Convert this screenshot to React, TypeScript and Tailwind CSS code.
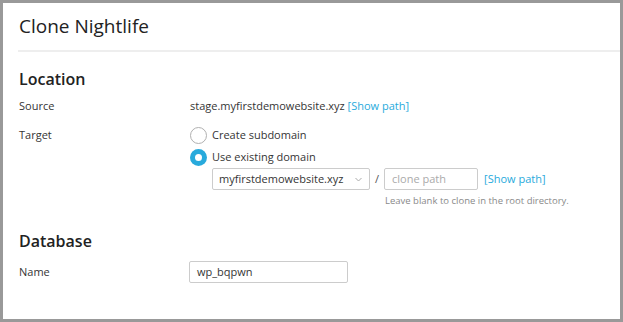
import React from 'react';

const Radio: React.FC<{ checked?: boolean; label: string }> = ({ checked, label }) => {
  return (
    <label className="flex items-center h-[22px] gap-[5px] cursor-pointer">
      {checked ? (
        <span className="w-[17px] h-[17px] rounded-full bg-[#28aadc] flex items-center justify-center">
          <span className="w-[7px] h-[7px] rounded-full bg-white" />
        </span>
      ) : (
        <span className="w-[17px] h-[17px] rounded-full border border-[#b0b0b0] bg-white" />
      )}
      <span>{label}</span>
    </label>
  );
};

const App: React.FC = () => {
  return (
    <div className="w-[623px] h-[322px] bg-[#999999] p-[3px] font-['Open_Sans',sans-serif] text-[11px] text-[#353535]">
      <div className="w-full h-full bg-white overflow-hidden">
        <div className="h-[47px] flex items-center pl-4 text-[19px] text-[#222]">Clone Nightlife</div>
        <div className="ml-[15px] h-[2px] bg-[#eeeeee]" />

        <div className="pl-4">
          <h2 className="mt-[16px] leading-[22px] text-[16px] font-semibold text-[#222]">Location</h2>

          <div className="mt-[6px] flex leading-[20px]">
            <div className="w-[171px]">Source</div>
            <div>
              stage.myfirstdemowebsite.xyz{' '}
              <a className="text-[#28aadc] cursor-pointer">[Show path]</a>
            </div>
          </div>

          <div className="mt-[8px] flex">
            <div className="w-[171px] leading-[22px]">Target</div>
            <div className="flex flex-col">
              <Radio label="Create subdomain" />
              <Radio checked label="Use existing domain" />
              <div className="ml-[22px] flex items-center">
                <div className="w-[158px] h-[22px] border border-[#cccccc] rounded-[2px] flex items-center justify-between pl-[6px] pr-[7px]">
                  <span>myfirstdemowebsite.xyz</span>
                  <svg width="7" height="5" viewBox="0 0 7 5" fill="none">
                    <path d="M0.5 1l3 3 3-3" stroke="#aaa" strokeWidth="1" />
                  </svg>
                </div>
                <span className="mx-[5px] text-[#555]">/</span>
                <div className="w-[94px] h-[22px] border border-[#cccccc] rounded-[2px] flex items-center pl-[7px] text-[#aaa]">
                  clone path
                </div>
                <a className="ml-[6px] text-[#28aadc] cursor-pointer">[Show path]</a>
              </div>
              <div className="ml-[195px] mt-[4px] leading-[14px] text-[9.5px] text-[#8a8a8a]">
                Leave blank to clone in the root directory.
              </div>
            </div>
          </div>

          <h2 className="mt-[22px] leading-[22px] text-[16px] font-semibold text-[#222]">Database</h2>

          <div className="mt-[9px] flex items-center">
            <div className="w-[170px]">Name</div>
            <div className="w-[159px] h-[22px] border border-[#cccccc] rounded-[2px] flex items-center pl-[7px]">wp_bqpwn</div>
          </div>
        </div>
      </div>
    </div>
  );
};

export default App;
